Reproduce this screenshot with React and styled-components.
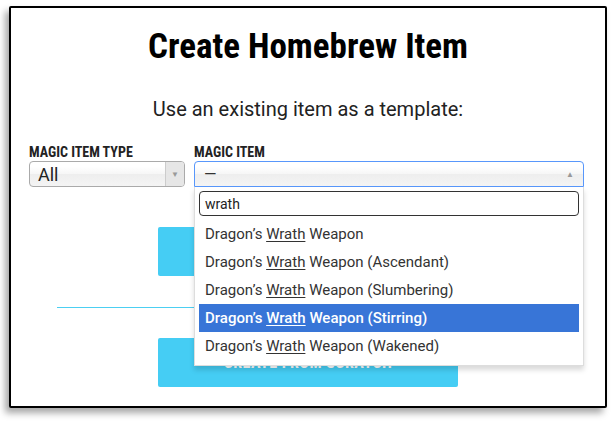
import styled, { createGlobalStyle } from "styled-components";

const Global = createGlobalStyle`
    body {
        margin: 0;
        background: #fff;
        font-family: Roboto, "Liberation Sans", sans-serif;
    }
`;

const Page = styled.div`
    padding: 6px 9px 14px 9px;
`;

const Card = styled.div`
    position: relative;
    width: 598px;
    height: 402px;
    box-sizing: border-box;
    border: 2px solid #000;
    border-radius: 2px;
    box-shadow: -4px 5px 7px rgba(0, 0, 0, 0.35);
    background: #fff;
    display: flex;
    flex-direction: column;
    align-items: center;
`;

const Title = styled.h1`
    margin: 19px 0 0 0;
    font-family: "Roboto Condensed", "Liberation Sans Narrow", sans-serif;
    font-weight: 700;
    font-size: 35px;
    line-height: 40px;
    color: #000;
`;

const Subtitle = styled.h2`
    margin: 30px 0 0 0;
    font-family: Roboto, "Liberation Sans", sans-serif;
    font-weight: 400;
    font-size: 20px;
    line-height: 24px;
    color: #222;
`;

const Fields = styled.div`
    align-self: stretch;
    display: flex;
    gap: 9px;
    padding: 0 0 0 18px;
    margin-top: 23px;
`;

const Field = styled.div`
    position: relative;
    width: ${p => p.width}px;
    display: flex;
    flex-direction: column;
`;

const Label = styled.label`
    font-family: "Roboto Condensed", "Liberation Sans Narrow", sans-serif;
    font-weight: 700;
    font-size: 14px;
    line-height: 16px;
    color: #222;
    text-transform: uppercase;
`;

const SelectBox = styled.div`
    margin-top: 1px;
    height: 26px;
    box-sizing: border-box;
    display: flex;
    align-items: center;
    border: 1px solid ${p => (p.open ? "#5897fb" : "#aaa")};
    border-radius: ${p => (p.open ? "4px 4px 0 0" : "4px")};
    background: linear-gradient(#fff 20%, #f6f6f6 50%, #eee 52%, #f4f4f4);
    font-size: 16px;
    color: #333;
`;

const SelectValue = styled.span`
    flex: 1;
    padding-left: ${p => (p.big ? "8px" : "9px")};
    font-size: ${p => (p.big ? "18px" : "16px")};
    color: ${p => (p.big ? "#222" : "#333")};
`;

const ArrowCell = styled.span`
    width: 18px;
    align-self: stretch;
    display: flex;
    align-items: center;
    justify-content: center;
    border-left: ${p => (p.divided ? "1px solid #ccc" : "none")};
    background: ${p => (p.divided ? "#e6e6e6" : "transparent")};
    border-radius: 0 3px 3px 0;
    color: #999;
    font-size: 8px;
    margin-right: ${p => (p.divided ? "0" : "4px")};
`;

const Dropdown = styled.div`
    position: absolute;
    top: 43px;
    left: 0;
    width: 390px;
    height: 179px;
    box-sizing: border-box;
    background: #fff;
    border: 1px solid #ddd;
    border-top: 0;
    box-shadow: 0 4px 5px rgba(0, 0, 0, 0.15);
    padding: 4px 4px 0 4px;
    z-index: 2;
`;

const Search = styled.div`
    height: 25px;
    box-sizing: border-box;
    border: 1px solid #333;
    border-radius: 4px;
    padding: 0 5px;
    display: flex;
    align-items: center;
    font-size: 14px;
    color: #222;
    margin-bottom: 4px;
`;

const Option = styled.div`
    height: 28px;
    display: flex;
    align-items: center;
    padding-left: 6px;
    font-size: 15px;
    color: ${p => (p.active ? "#fff" : "#333")};
    background: ${p => (p.active ? "#3875d7" : "transparent")};
    font-weight: ${p => (p.active ? 500 : 400)};

    u {
        text-decoration: underline;
        text-underline-offset: 2px;
    }
`;

const Button = styled.div`
    width: 300px;
    height: 49px;
    background: #45cdf4;
    border-radius: 2px;
    display: flex;
    align-items: center;
    justify-content: center;
    color: #fff;
    font-family: "Roboto Condensed", "Liberation Sans Narrow", sans-serif;
    font-weight: 700;
    font-size: 16px;
    letter-spacing: 0.5px;
    margin-top: ${p => p.top}px;
`;

const Rule = styled.hr`
    width: 502px;
    border: 0;
    border-top: 1px solid #4ccff2;
    margin: 31px 0 0 0;
`;

const options = ["", " (Ascendant)", " (Slumbering)", " (Stirring)", " (Wakened)"];

export default function App() {
    return (
        <Page>
            <Global />
            <Card>
                <Title>Create Homebrew Item</Title>
                <Subtitle>Use an existing item as a template:</Subtitle>
                <Fields>
                    <Field width={156}>
                        <Label>Magic Item Type</Label>
                        <SelectBox>
                            <SelectValue big>All</SelectValue>
                            <ArrowCell divided>▼</ArrowCell>
                        </SelectBox>
                    </Field>
                    <Field width={390}>
                        <Label>Magic Item</Label>
                        <SelectBox open>
                            <SelectValue>—</SelectValue>
                            <ArrowCell>▲</ArrowCell>
                        </SelectBox>
                        <Dropdown>
                            <Search>wrath</Search>
                            {options.map((o, i) => (
                                <Option key={i} active={i === 3}>
                                    Dragon’s&nbsp;<u>Wrath</u>&nbsp;Weapon{o}
                                </Option>
                            ))}
                        </Dropdown>
                    </Field>
                </Fields>
                <Button top={40}>USE TEMPLATE</Button>
                <Rule />
                <Button top={30}>CREATE FROM SCRATCH</Button>
            </Card>
        </Page>
    );
}
